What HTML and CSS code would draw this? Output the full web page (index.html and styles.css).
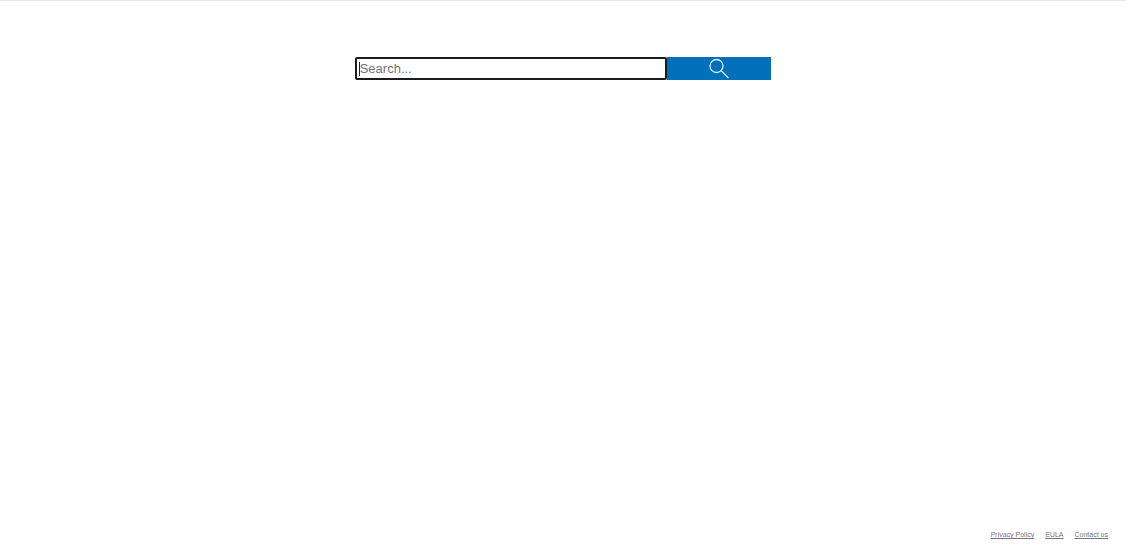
FILE: index.html
```html
<!DOCTYPE html>
<html lang="en">
<head>
<meta charset="utf-8">
<meta name="viewport" content="width=device-width, initial-scale=1">
<title>Search</title>
<link rel="stylesheet" href="styles.css">
</head>
<body>
<main class="main">
  <form class="search" role="search">
    <div class="search-field">
      <input class="search-input" type="text" name="q" placeholder="Search..." aria-label="Search">
      <span class="caret" aria-hidden="true"></span>
    </div>
    <button class="search-button" type="submit" aria-label="Submit search">
      <svg class="search-icon" viewBox="0 0 22 22" aria-hidden="true">
        <circle cx="8.5" cy="8" r="6.5"/>
        <path d="M13 12.6 20.5 20"/>
      </svg>
    </button>
  </form>
</main>
<footer class="footer">
  <a class="footer-link" href="#privacy">Privacy Policy</a>
  <a class="footer-link" href="#eula">EULA</a>
  <a class="footer-link" href="#contact">Contact us</a>
</footer>
</body>
</html>
```
FILE: styles.css
```css
* {
  box-sizing: border-box;
}

body {
  display: flex;
  flex-direction: column;
  min-height: 100vh;
  margin: 0;
  border-top: 1px solid #e6e6e6;
  background: #fff;
  font-family: "Liberation Sans", Arial, sans-serif;
}

.main {
  flex: 1;
  padding-top: 56px;
}

.search {
  display: flex;
  width: 37%;
  height: 23px;
  margin: 0 auto;
}

.search-field {
  position: relative;
  flex: 3;
}

.search-input {
  display: block;
  width: 100%;
  height: 100%;
  padding: 0 3px;
  border: 2px solid #1b1b1f;
  border-radius: 2px;
  outline: none;
  background: #fff;
  color: #222;
  font: 13px "Liberation Sans", Arial, sans-serif;
}

.search-input::placeholder {
  color: #757575;
  opacity: 1;
}

.caret {
  position: absolute;
  top: 5px;
  left: 4px;
  width: 1px;
  height: 14px;
  background: #222;
}

.search-button {
  display: flex;
  flex: 1;
  align-items: center;
  justify-content: center;
  padding: 0;
  border: 0;
  background: #0070ba;
}

.search-icon {
  width: 22px;
  height: 22px;
  fill: none;
  stroke: #d9f0ff;
  stroke-width: 1.3;
}

.footer {
  display: flex;
  justify-content: flex-end;
  gap: 11px;
  padding: 0 18px 5px;
  font-size: 7px;
  line-height: 10px;
}

.footer-link {
  color: #777;
}
```
